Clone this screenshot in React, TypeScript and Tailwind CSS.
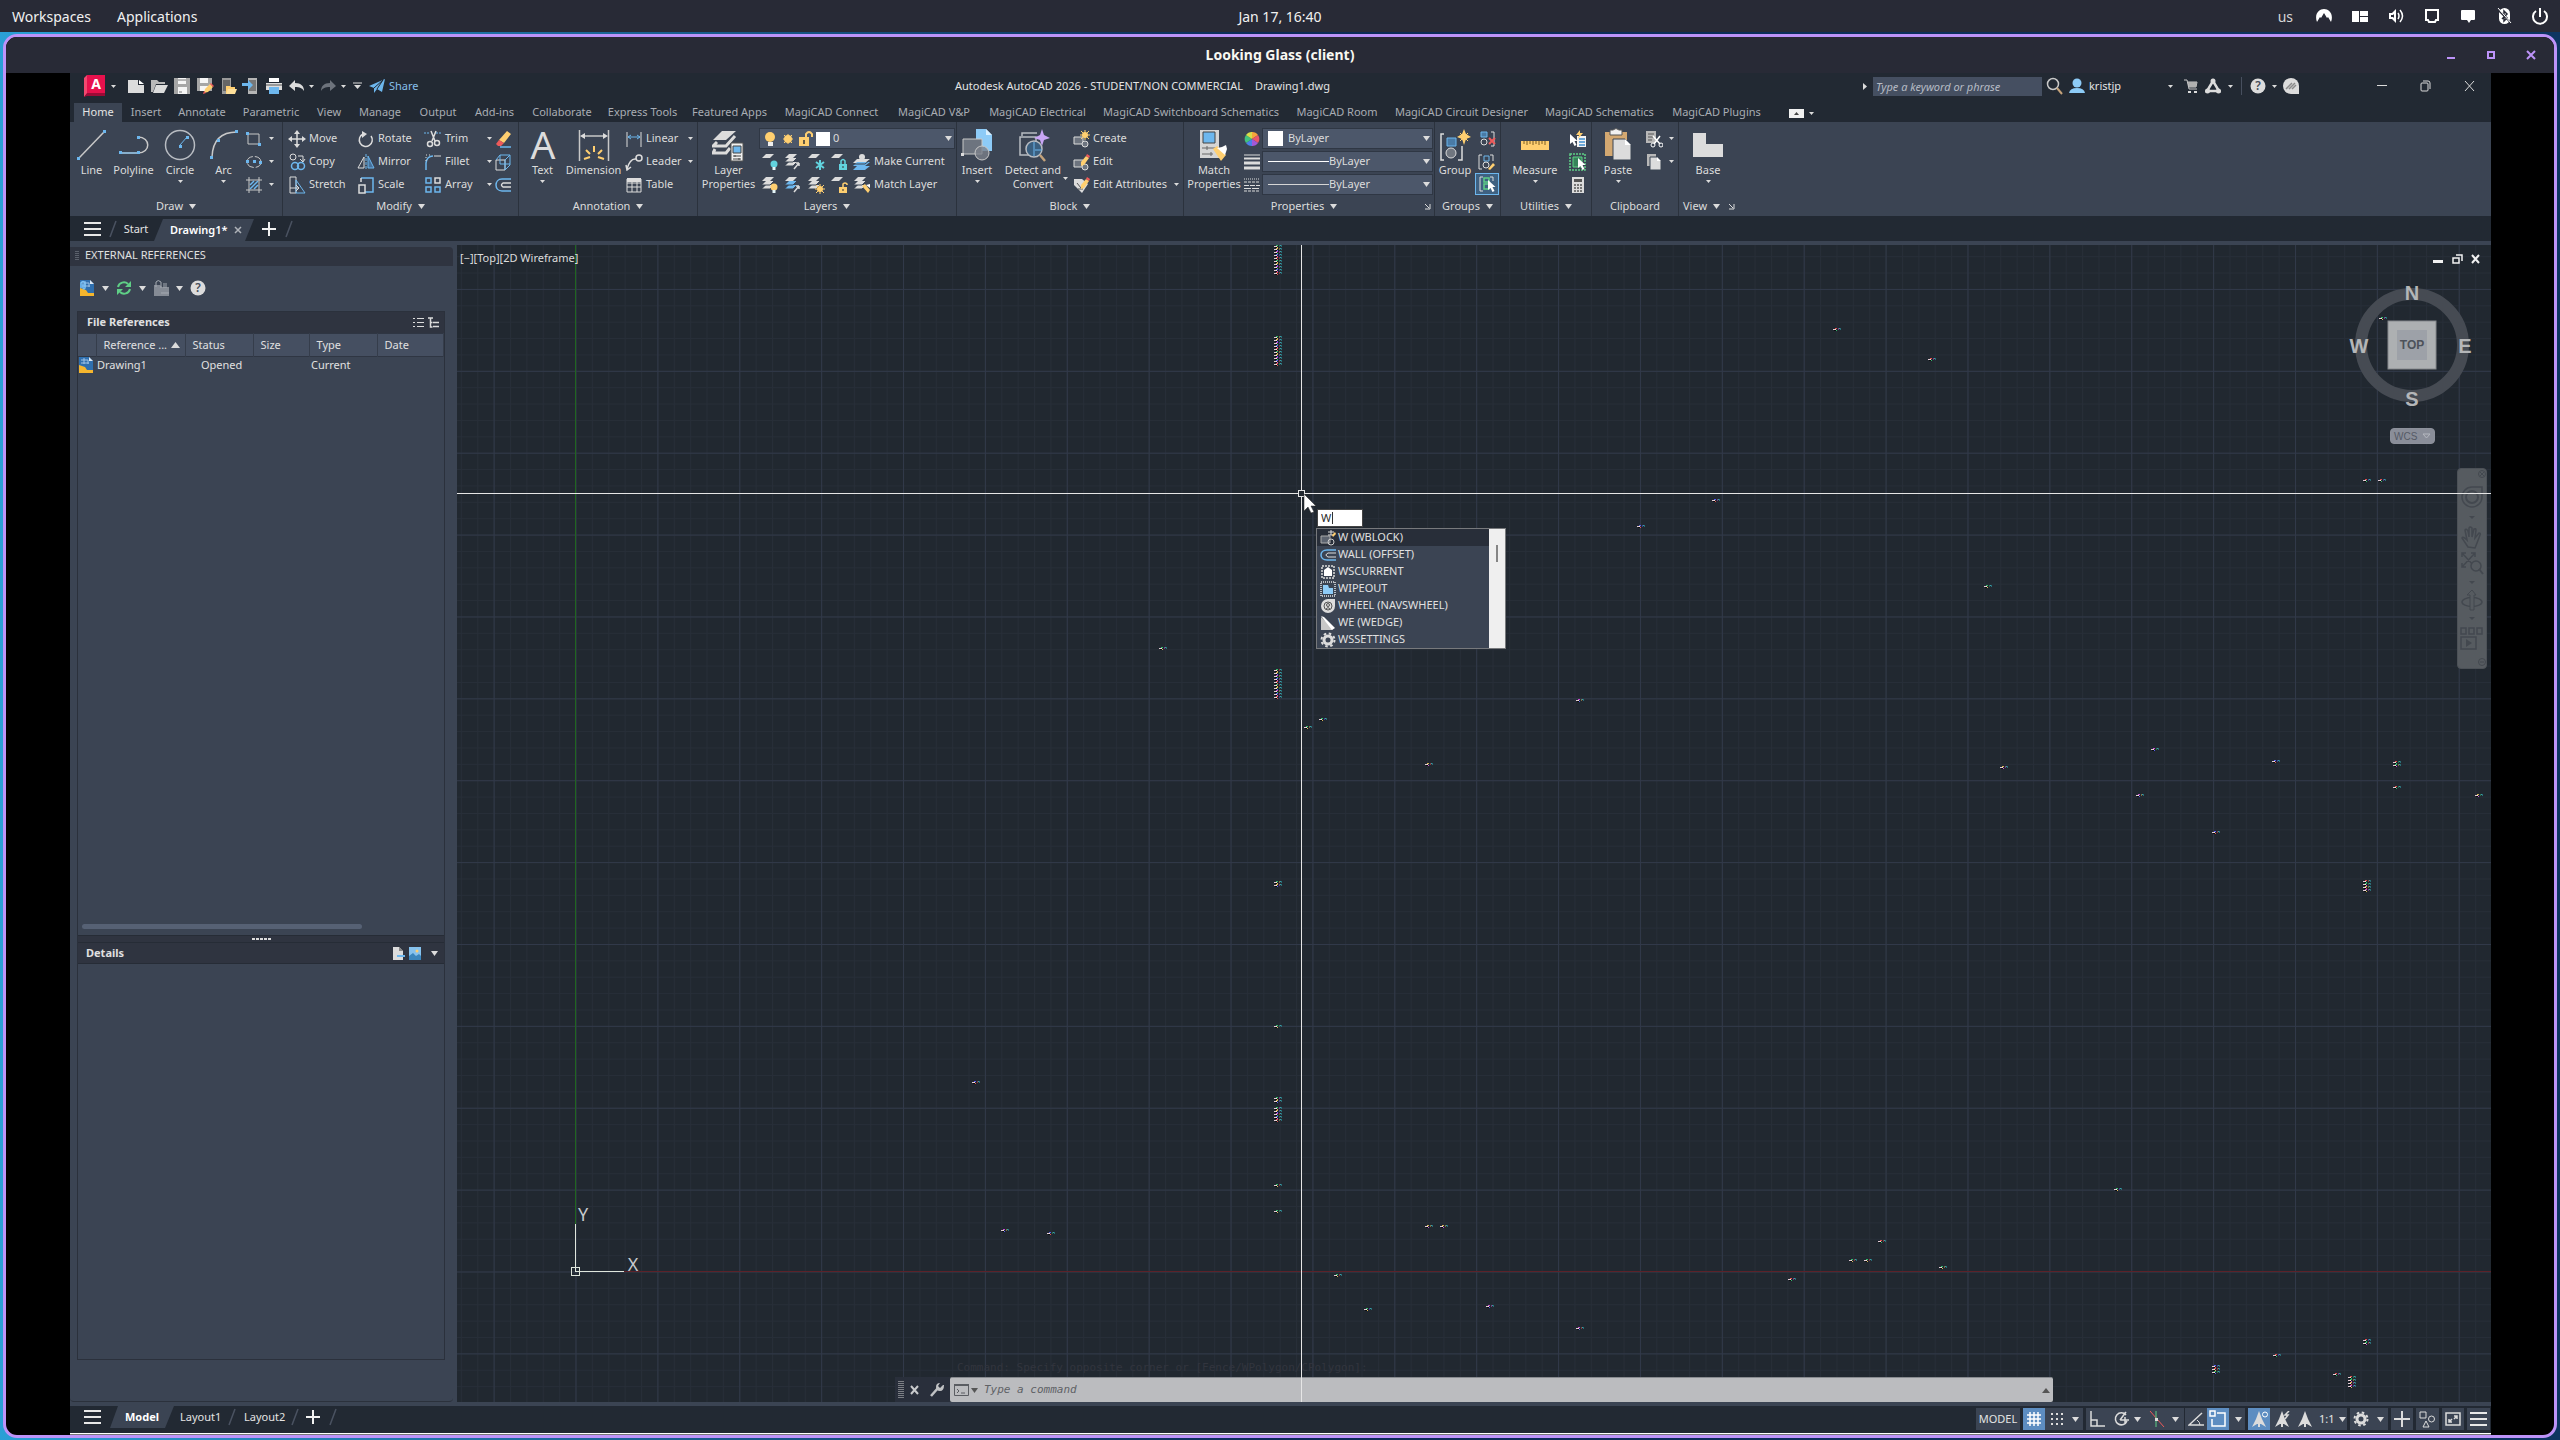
import React, { ReactNode } from "react";

type IconProps = { w?: number; h?: number; vb?: string; children: ReactNode };

/** Inline drawing with no fill by default. */
function Icon({ w = 18, h = 18, vb, children }: IconProps) {
  return (
    <svg width={w} height={h} viewBox={vb ?? `0 0 ${w} ${h}`} fill="none" stroke="none" aria-hidden="true" className="shrink-0">
      {children}
    </svg>
  );
}

const L = "#dcdcdc";
const B = "#6db7ee";
const Y = "#ffcf70";
const C = "#62d3df";
const GR = "#5fcf86";
const RD = "#ee5a5a";

function Caret({ small = false }: { small?: boolean }) {
  return small ? (
    <Icon w={5} h={3}><path d="M0 0h5L2.500 3z" fill={L} /></Icon>
  ) : (
    <Icon w={7} h={5}><path d="M0 0h7L3.500 5z" fill={L} /></Icon>
  );
}

/* ---------- desktop bar ---------- */

function DesktopBar() {
  return (
    <header className="grid h-8 shrink-0 grid-cols-3 items-center bg-[#282a36] font-['Noto_Sans',sans-serif] text-[14px] text-[#f1f1f1]">
      <nav className="flex gap-[26px] pl-3">
        <button>Workspaces</button>
        <button>Applications</button>
      </nav>
      <div className="text-center">Jan 17, 16:40</div>
      <div className="flex items-center justify-end gap-[18px] pr-[11px]">
        <span className="mr-1 text-[#d6d6d8]">us</span>
        <Icon><path d="M2 15C-1 7 4 2 9 2s10 5 7 13l-3-5-1 1-3-5-3 5-1-1z" fill="#fff" /></Icon>
        <Icon><path d="M1 4h7v11H1zM9 4h8v5H9zM9 10h8v5H9z" fill="#fff" /></Icon>
        <Icon>
          <path d="M2 6h3l4-4v14l-4-4H2z" fill="#fff" />
          <path d="M4 8h2l1-1v4l-1-1H4z" fill="#282a36" />
          <path d="M11 6q2 3 0 6M13 3q5 6 0 12" stroke="#fff" strokeWidth="1.500" />
        </Icon>
        <Icon><path d="M3 3h12v10h-2l-1 2H6l-1-2H3z" stroke="#fff" strokeWidth="2" /></Icon>
        <Icon><path d="M3 3h12q1 0 1 1v8q0 1-1 1h-3l-2 3-2-3H3q-1 0-1-1V4q0-1 1-1z" fill="#fff" /></Icon>
        <Icon>
          <rect x="4" y="1" width="11" height="16" rx="5.500" fill="#fff" />
          <path d="M7 6l5 5-3 3V4l3 3-5 5M2 2l14 14" stroke="#282a36" strokeWidth="1.500" />
          <path d="M3 1l13 15" stroke="#fff" />
        </Icon>
        <Icon><path d="M5 4a7 7 0 1 0 8 0M9 1v9" stroke="#fff" strokeWidth="2" /></Icon>
      </div>
    </header>
  );
}

function WindowTitle() {
  return (
    <div className="grid h-9 shrink-0 grid-cols-3 items-center bg-[#282a36] pb-px font-['Noto_Sans',sans-serif]">
      <span />
      <h1 className="text-center text-[14px] font-bold text-[#f8f8f2]">Looking Glass (client)</h1>
      <div className="flex justify-end gap-[30px] pr-[18px]">
        <button aria-label="Minimize window"><Icon w={10} h={10}><path d="M1 8h8" stroke="#bd93f9" strokeWidth="2" /></Icon></button>
        <button aria-label="Maximize window"><Icon w={10} h={10}><path d="M2 2h6v6H2z" stroke="#bd93f9" strokeWidth="2" /></Icon></button>
        <button aria-label="Close window"><Icon w={10} h={10}><path d="M1 1l8 8M9 1L1 9" stroke="#bd93f9" strokeWidth="2" /></Icon></button>
      </div>
    </div>
  );
}

/* ---------- application title bar ---------- */

function AppTitle() {
  return (
    <div className="grid h-7 shrink-0 grid-cols-[885px_1fr_auto] items-center pb-[2px] text-[#e4e4e4]">
      <div className="flex items-center pl-[14px]">
        <button aria-label="Application menu" className="mr-[5px]">
          <Icon w={22} h={22}>
            <path d="M0 3l3-3v19l-3 3z" fill="#f2496f" />
            <path d="M3 0h18v18H3z" fill="#e8114d" />
            <path d="M0 22l3-4h18v3H3z" fill="#9c0b36" />
            <text x="12" y="14" textAnchor="middle" fontSize="14" fontWeight="700" fill="#fff">A</text>
          </Icon>
        </button>
        <Caret small />
        <div className="ml-[11px] flex items-center gap-[5px]">
          <button aria-label="New"><Icon><path d="M1 3h10v5h6v8H1z" fill={L} /><path d="M12 3l5 4h-5z" fill="#fff" /></Icon></button>
          <button aria-label="Open"><Icon><path d="M1 3h6l2 2h6v2H6L3 15H1z" fill="#b9b9b9" /><path d="M6 8h12l-4 8H3z" fill={L} /></Icon></button>
          <button aria-label="Save"><Icon><path d="M1 1h16v16H1z" fill="#a6a6a6" /><path d="M5 1h8v6H5zM5 10h9v7H5z" fill="#f5f5f5" /><path d="M5 3h8M6 15h3" stroke="#777" /></Icon></button>
          <button aria-label="Save as"><Icon><path d="M1 1h15v13H1z" fill="#a6a6a6" /><path d="M4 1h8v5H4zM4 9h8v5H4z" fill="#f5f5f5" /><path d="M8 16l1-4 5-5 3 3-5 5z" fill={Y} /><path d="M14 7l1-1 3 3-1 1zM7 17l1-3 2 2z" fill={RD} /></Icon></button>
          <button aria-label="Open from web"><Icon><path d="M3 1h9v16H3z" fill="#9a9a9a" /><path d="M4 3h7v11H4z" fill="#666" /><path d="M7 9h4l1 1h4v7H7z" fill={Y} /><path d="M9 12h9l-2 5H7z" fill="#ffe09a" /></Icon></button>
          <button aria-label="Save to web"><Icon><path d="M6 1h9v16H6z" fill="#b5b5b5" /><path d="M7 3h7v11H7z" fill="#777" /><path d="M0 6h6V3l5 5-5 5V9H0z" fill={B} /></Icon></button>
          <button aria-label="Plot"><Icon><path d="M4 1h10v4H4z" fill="#fff" /><path d="M1 6h16v7H1z" fill={L} /><path d="M1 8h16" stroke="#555" /><path d="M4 10h10v7H4z" fill={B} /></Icon></button>
          <button aria-label="Undo"><Icon><path d="M7 3v3c6 0 9 3 9 8-2-3-4-4-9-4v4L1 9z" fill={L} /></Icon></button>
        </div>
        <div className="ml-[3px] flex items-center"><Caret small /></div>
        <button aria-label="Redo" className="mr-[4px] ml-[5px]"><Icon><path d="M11 3v3C5 6 2 9 2 14c2-3 4-4 9-4v4l6-5z" fill="#6d737c" /></Icon></button>
        <Caret small />
        <button aria-label="Customize toolbar" className="mx-[7px]"><Icon w={9} h={8}><path d="M0 1h9" stroke={L} /><path d="M1 3h7L4.500 7z" fill={L} /></Icon></button>
        <button className="flex items-center gap-1 text-[11px] text-[#86bfea]">
          <Icon w={16} h={16}><path d="M0 8L16 1l-3 13-5-3-3 4V10z" fill={B} /><path d="M5 10l9-8-6 9" stroke="#222933" /></Icon>
          Share
        </button>
      </div>
      <div className="flex gap-3 text-[11px] whitespace-pre">
        <span>Autodesk AutoCAD 2026 - STUDENT/NON COMMERCIAL</span>
        <span>Drawing1.dwg</span>
      </div>
      <div className="flex items-center justify-end pr-[14px]">
        <Icon w={4} h={7}><path d="M0 0l4 3.500L0 7z" fill={L} /></Icon>
        <input aria-label="Search" placeholder="Type a keyword or phrase" className="mr-[4px] ml-[6px] h-[19px] w-[169px] bg-[#454f61] px-[3px] text-[11px] italic placeholder:text-[#b7bcc5]" />
        <Icon><circle cx="7" cy="7" r="5.500" stroke="#c9c9c9" strokeWidth="1.500" /><path d="M11 11l5 6" stroke="#c4a27a" strokeWidth="2" /></Icon>
        <button className="ml-[5px] flex w-[93px] items-center gap-1 text-[11px]">
          <Icon w={16} h={16}><circle cx="8" cy="5" r="4.500" fill="#8dcbf7" /><path d="M0 15q1-5 8-5t8 5z" fill="#8dcbf7" /></Icon>
          kristjp
        </button>
        <span className="mr-[11px] ml-[6px]"><Caret small /></span>
        <Icon w={14} h={16}><path d="M0 2h3l2 9h8M4 4h9l-1 5H5z" stroke="#c8c8c8" /><path d="M4 4h9l-1 5H5z" fill="#b0b0b0" /><path d="M4 13h3v2H4zM10 13h3v2h-3z" fill={L} /></Icon>
        <span className="mx-[7px]"><Icon w={16} h={16}><path d="M8 3L2 13h12z" stroke={L} strokeWidth="2.500" /><circle cx="8" cy="3" r="2.500" fill={L} /><circle cx="2.500" cy="13" r="2.500" fill={L} /><circle cx="13.500" cy="13" r="2.500" fill={L} /></Icon></span>
        <Caret small />
        <span className="mx-[8px] h-[18px] w-px bg-[#474f5e]" />
        <HelpIcon />
        <span className="mx-[6px]"><Caret small /></span>
        <Icon w={16} h={16}><path d="M8 0a8 8 0 0 1 8 8v8H8A8 8 0 0 1 8 0z" fill={L} /><path d="M3 11l6-6M6 11l6-6M9 11l4-4" stroke="#8a8a8a" strokeWidth="1.500" /></Icon>
        <button aria-label="Minimize" className="ml-[78px]"><Icon w={10} h={12}><path d="M0 5.500h10" stroke={L} /></Icon></button>
        <button aria-label="Restore" className="ml-[33px]"><Icon w={11} h={12}><rect x="1" y="3" width="7" height="8" rx="1" stroke={L} /><path d="M3 1h5q2 0 2 2v6" stroke={L} /></Icon></button>
        <button aria-label="Close" className="mr-[2px] ml-[33px]"><Icon w={11} h={12}><path d="M1 1l9 10M10 1L1 11" stroke={L} /></Icon></button>
      </div>
    </div>
  );
}

function HelpIcon() {
  return (
    <Icon w={16} h={16}>
      <circle cx="8" cy="8" r="7.500" fill={L} />
      <text x="8" y="12" textAnchor="middle" fontSize="12" fontWeight="600" fill="#444c59">?</text>
    </Icon>
  );
}

const tabs: [string, string][] = [
  ["Home", "w-[48px]"], ["Insert", "w-[48px]"], ["Annotate", "w-[64px]"], ["Parametric", "w-[74px]"], ["View", "w-[42px]"],
  ["Manage", "w-[60px]"], ["Output", "w-[56px]"], ["Add-ins", "w-[57px]"], ["Collaborate", "w-[78px]"], ["Express Tools", "w-[83px]"],
  ["Featured Apps", "w-[91px]"], ["MagiCAD Connect", "w-[113px]"], ["MagiCAD V&P", "w-[92px]"], ["MagiCAD Electrical", "w-[115px]"],
  ["MagiCAD Switchboard Schematics", "w-[192px]"], ["MagiCAD Room", "w-[100px]"], ["MagiCAD Circuit Designer", "w-[149px]"],
  ["MagiCAD Schematics", "w-[127px]"], ["MagiCAD Plugins", "w-[107px]"],
];

function RibbonTabs() {
  return (
    <nav className="flex h-[21px] shrink-0 items-end pl-1 text-[11px] text-[#a9adb4]">
      {tabs.map(([name, width], i) => (
        <button key={name} className={`${width} h-[19px] text-center whitespace-nowrap ${i === 0 ? "bg-[#3b4453] text-[#e4e4e4]" : ""}`}>{name}</button>
      ))}
      <button aria-label="Minimize ribbon" className="flex h-[17px] items-center gap-[5px] pl-[19px]">
        <Icon w={15} h={9}><path d="M0 0h15v9H0z" fill="#f1f1f1" /><path d="M5 6l2.500-3L10 6z" fill="#444" /></Icon>
        <Caret small />
      </button>
    </nav>
  );
}

/* ---------- ribbon ---------- */

function Panel({ width, title, launcher, caret = true, children }: { width: string; title: string; launcher?: boolean; caret?: boolean; children: ReactNode }) {
  return (
    <section className={`${width} flex shrink-0 flex-col border-r border-[#2b323d] pt-[5px]`}>
      <div className="flex h-[69px]">{children}</div>
      <div className="flex h-5 items-center">
        <button className="flex flex-1 items-center justify-center gap-[6px]">{title}{caret && <Caret />}</button>
        {launcher && <button aria-label={`${title} settings`} className="mr-[3px]"><Icon w={7} h={7}><path d="M1 1l4 4M6 1v5H1" stroke={L} /></Icon></button>}
      </div>
    </section>
  );
}

function Big({ width, label, icon, caret }: { width: string; label: string; icon: ReactNode; caret?: boolean }) {
  return (
    <button className={`${width} flex shrink-0 flex-col items-center leading-[14px]`}>
      <span className="flex h-9 items-center">{icon}</span>
      <span className="whitespace-pre">{label}</span>
      {caret && <span className="mt-[3px]"><Caret small /></span>}
    </button>
  );
}

function Small({ icon, label, caret, caretEnd }: { icon: ReactNode; label?: string; caret?: boolean; caretEnd?: boolean }) {
  return (
    <button aria-label={label ?? "Tool"} className="flex h-[23px] items-center gap-[3px] whitespace-nowrap">
      {icon}
      {label && <span className={caretEnd ? "flex-1 text-left" : ""}>{label}</span>}
      {caret && <span className="ml-[3px]"><Caret small /></span>}
    </button>
  );
}

function Col({ width, children }: { width: string; children: ReactNode }) {
  return <div className={`${width} flex shrink-0 flex-col`}>{children}</div>;
}

function Drop({ label, value, children }: { label: string; value: string; children?: ReactNode }) {
  return (
    <div className="my-px flex h-[21px] items-center border border-[#2f3744] bg-[#4c576a] pr-[2px]">
      {children}
      <select aria-label={label} className="min-w-0 flex-1 appearance-none bg-transparent text-[11px]"><option>{value}</option></select>
      <Caret />
    </div>
  );
}

const sq = (x: number, y: number) => <rect key={`${x}-${y}`} x={x} y={y} width="3" height="3" fill={B} />;

const sheet = (y: number, fill: string) => <path key={y} d={`M5 ${y}h8l-4 4H1z`} fill={fill} />;

function LayerIcon({ tint = L, one = false, children }: { tint?: string; one?: boolean; children?: ReactNode }) {
  return (
    <Icon>
      {!one && sheet(9, tint)}
      {!one && sheet(5, tint)}
      {!one && <path d="M1 9h8l4-4M1 13h8l4-4" stroke="#3b4453" />}
      {sheet(1, L)}
      {children}
    </Icon>
  );
}

const bulb = (c: string) => <><circle cx="13" cy="11" r="3.500" fill={c} /><path d="M11.500 14h3v3h-3z" fill="#e6f6f8" /></>;
const sun = (c: string, x: number, y: number) => (
  <>
    <circle cx={x} cy={y} r="3" fill={c} />
    <path d={`M${x - 5} ${y}h10M${x} ${y - 5}v10M${x - 4} ${y - 4}l8 8M${x + 4} ${y - 4}l-8 8`} stroke={c} />
  </>
);
const lock = (c: string, open: boolean) => <><path d="M9 11h8v6H9z" fill={c} /><path d={open ? "M13 11V8q2-2 4 0v1" : "M11 11V8q2-3 4 0v3"} stroke={c} strokeWidth="1.500" /><path d="M13 13v2" stroke="#333" /></>;
const arrowMark = <path d="M10 16l5-6M15 10h-3M15 10v3" stroke={L} strokeWidth="1.500" />;
const pencil = <><path d="M9 9l5-6 3 2-5 7-3 1z" fill={Y} /><path d="M14 3l1-2 3 2-1 2z" fill={RD} /></>;
const blockBase = <><path d="M2 7h9v7H2z" fill="#6d747f" stroke={L} /><circle cx="13" cy="14" r="3" fill="#6d747f" stroke={L} /></>;
const cursor = (x: number, y: number) => <path d={`M${x} ${y}v10l2.500-2 2 4 2-1-2-4h3z`} fill="#fff" />;

function Ribbon() {
  return (
    <div className="flex h-[94px] shrink-0 bg-[#3b4453] text-[11px] text-[#dcdcdc]">
      <Panel width="w-[213px]" title="Draw">
        <Big width="w-[43px]" label="Line" icon={<Icon w={32} h={34}><path d="M3 30L28 4" stroke="#c8c8c8" strokeWidth="1.500" />{sq(1, 29)}{sq(27, 2)}</Icon>} />
        <Big width="w-[41px]" label="Polyline" icon={<Icon w={32} h={34}><path d="M3 25H20C33 25 33 9 20 9" stroke="#c8c8c8" strokeWidth="1.500" />{sq(1, 23)}{sq(19, 23)}{sq(19, 8)}<path d="M4 25h15" stroke={B} /></Icon>} />
        <Big width="w-[52px]" label="Circle" caret icon={<Icon w={32} h={34}><circle cx="16" cy="17" r="14.500" stroke="#b8bcc2" strokeWidth="1.500" /><path d="M16 17l7-8" stroke={B} />{sq(15, 17)}{sq(22, 8)}</Icon>} />
        <Big width="w-[35px]" label="Arc" caret icon={<Icon w={32} h={34}><path d="M4 29Q5 4 29 4" stroke="#c8c8c8" strokeWidth="1.500" />{sq(2, 28)}{sq(9, 11)}{sq(27, 2)}</Icon>} />
        <Col width="ml-[4px] w-[34px]">
          <Small caret icon={<Icon><path d="M3 4h11v10H3z" stroke="#c8c8c8" />{sq(1, 2)}{sq(13, 13)}</Icon>} />
          <Small caret icon={<Icon><ellipse cx="9" cy="9" rx="7" ry="5.500" stroke="#c8c8c8" strokeDasharray="8 2" />{sq(8, 7)}{sq(1, 7)}{sq(14, 8)}</Icon>} />
          <Small caret icon={<Icon><path d="M1 4h16M1 14h16M4 1v16M14 1v16" stroke="#c8c8c8" /><path d="M5 9l4-4M5 13l8-8M9 13l4-4" stroke={B} strokeWidth="1.500" /></Icon>} />
        </Col>
      </Panel>

      <Panel width="w-[236px]" title="Modify">
        <Col width="ml-[5px] w-[69px]">
          <Small label="Move" icon={<Icon><path d="M9 2v14M2 9h14" stroke={L} strokeWidth="1.500" /><path d="M9 0l3 4H6zM9 18l3-4H6zM0 9l4-3v6zM18 9l-4-3v6z" fill={L} /></Icon>} />
          <Small label="Copy" icon={<Icon><circle cx="5" cy="4" r="3" stroke={L} /><path d="M10 3h5v5M12 6l3 3 2-3" stroke={L} /><circle cx="7" cy="13" r="3.500" stroke={B} strokeWidth="1.500" /><circle cx="13" cy="13" r="3.500" stroke={B} strokeWidth="1.500" /></Icon>} />
          <Small label="Stretch" icon={<Icon><path d="M2 1h6v16H2z" stroke={L} /><path d="M8 4l9 13H8z" stroke={B} /><path d="M2 12h9M8 9l3 3-3 3" stroke={L} /></Icon>} />
        </Col>
        <Col width="w-[67px]">
          <Small label="Rotate" icon={<Icon><path d="M6 4a6.500 6.500 0 1 0 8 2" stroke={L} strokeWidth="1.500" /><path d="M5 1l5 3-5 4z" fill={L} /></Icon>} />
          <Small label="Mirror" icon={<Icon><path d="M7 4v11H1z" stroke={L} /><path d="M11 3v12h6z" stroke={B} fill="#46719a" /><path d="M9 1v16" stroke={B} strokeDasharray="3 1" /></Icon>} />
          <Small label="Scale" icon={<Icon><path d="M4 2h12v14H8" stroke={B} strokeWidth="1.500" /><path d="M2 9h6v8H2zM4 2v4" stroke={L} strokeWidth="1.500" /></Icon>} />
        </Col>
        <Col width="w-[68px]">
          <Small caret caretEnd label="Trim" icon={<Icon><path d="M0 3h6M12 3h5" stroke={B} strokeDasharray="2 1" /><path d="M7 1l4 10M12 1L8 11" stroke={L} strokeWidth="1.500" /><circle cx="6" cy="14" r="2.500" stroke={L} strokeWidth="1.500" /><circle cx="13" cy="13" r="2.500" stroke={L} strokeWidth="1.500" /></Icon>} />
          <Small caret caretEnd label="Fillet" icon={<Icon><path d="M2 17V10Q3 3 9 3" stroke={B} strokeWidth="1.500" /><path d="M10 3h7" stroke={L} /><path d="M2 8V2h6" stroke={L} strokeDasharray="1 2" /></Icon>} />
          <Small caret caretEnd label="Array" icon={<Icon><path d="M2 2h5v5H2zM11 11h5v5h-5zM2 11h5v5H2z" stroke={B} strokeWidth="1.500" /><path d="M11 2h5v5h-5z" stroke={L} strokeWidth="1.500" /></Icon>} />
        </Col>
        <Col width="ml-[2px] w-[20px]">
          <Small icon={<Icon><path d="M6 17h11" stroke={B} strokeWidth="1.500" /><path d="M5 10l8-9 4 3-7 9z" fill={Y} /><path d="M5 10l5 3-3 3H4l-2-2z" fill={RD} /></Icon>} />
          <Small icon={<Icon><path d="M2 7h9v10H2z" stroke={L} /><path d="M2 7l4-5h10l-5 5M16 2v10l-5 5M11 7v10M6 2v9h10" stroke={B} /></Icon>} />
          <Small icon={<Icon><path d="M17 3H8C0 3 0 15 8 15h9" stroke={B} strokeWidth="1.500" /><path d="M17 7H9Q6 9 9 11h8" stroke={L} strokeWidth="1.500" /></Icon>} />
        </Col>
      </Panel>

      <Panel width="w-[179px]" title="Annotation">
        <Big width="w-[47px]" label="Text" caret icon={<Icon w={28} h={34}><text x="14" y="31" textAnchor="middle" fontSize="39" fill={L}>A</text></Icon>} />
        <Big width="w-[55px]" label="Dimension" icon={<Icon w={32} h={34}><path d="M1.500 2v31M30.500 2v31M4 8h24" stroke="#c8c8c8" strokeWidth="1.500" /><path d="M2 8l5-3v6zM30 8l-5-3v6z" fill={L} /><path d="M16 18v6M8 22l4 4M24 22l-4 4M6 31l6-2M26 31l-6-2" stroke={Y} strokeWidth="2" /></Icon>} />
        <Col width="ml-[4px] w-[68px]">
          <Small caret caretEnd label="Linear" icon={<Icon><path d="M2 2v15M16 2v15" stroke={L} /><path d="M3 7h12M6 5L3 7l3 2M12 5l3 2-3 2" stroke={B} /></Icon>} />
          <Small caret caretEnd label="Leader" icon={<Icon><path d="M2 16Q5 5 11 6M1 12l1 5 4-3" stroke={L} strokeWidth="1.500" /><circle cx="14" cy="5" r="3" stroke={L} strokeWidth="1.500" /></Icon>} />
          <Small label="Table" icon={<Icon><path d="M2 3h14v13H2zM2 7h14M2 11h14M7 5v11M12 5v11" stroke={L} /><path d="M2 2h14v4H2z" fill={L} /></Icon>} />
        </Col>
      </Panel>

      <Panel width="w-[259px]" title="Layers">
        <Big width="w-[61px]" label={"Layer\nProperties"} icon={<Icon w={34} h={34}><path d="M10 3h14L14 12H1z" fill={L} /><path d="M5 14L1 18h13l9-10M3 21l-2 4h13l4-5" stroke={L} strokeWidth="3" /><path d="M19 15h12v18H19z" fill="#f1f1f1" stroke="#555" /><path d="M21 18h8v7h-8z" fill={B} stroke="#444" /><path d="M21 28h8M21 31h8M23 27v2M27 30v2" stroke="#444" /></Icon>} />
        <div className="flex w-[196px] flex-col">
          <Drop label="Layer" value="0">
            <span className="ml-[3px] flex items-center gap-px pr-[3px]">
              <Icon w={15}><circle cx="7" cy="7" r="5" fill={Y} /><path d="M5 12h5v4H5z" fill="#eee" /></Icon>
              <Icon w={17}>{sun(Y, 9, 9)}<circle cx="9" cy="9" r="4" fill={Y} /></Icon>
              <Icon w={18}><path d="M2 7h10v9H2z" fill={Y} /><path d="M9 7V4q3-4 6 0v3" stroke={Y} strokeWidth="2" /><path d="M7 10v4" stroke="#333" strokeWidth="1.500" /></Icon>
              <span className="size-[14px] bg-white" />
            </span>
          </Drop>
          <div className="flex gap-[5px] pl-[2px]">
            <Small icon={<LayerIcon one>{bulb(C)}</LayerIcon>} />
            <Small icon={<LayerIcon>{arrowMark}</LayerIcon>} />
            <Small icon={<LayerIcon one><path d="M13 7v10M9 9l8 6M17 9l-8 6" stroke={C} strokeWidth="2" /></LayerIcon>} />
            <Small icon={<LayerIcon one>{lock(C, false)}</LayerIcon>} />
            <Small label="Make Current" icon={<Icon><path d="M4 6h13l-5 4H0z" fill={L} /><path d="M4 9h13l-5 4H0zM4 13h13l-5 4H0z" fill={B} /><circle cx="9" cy="4" r="3" fill={L} /><path d="M0 11h12l5-4" stroke="#3b4453" /></Icon>} />
          </div>
          <div className="flex gap-[5px] pl-[2px]">
            <Small icon={<LayerIcon>{bulb(Y)}</LayerIcon>} />
            <Small icon={<LayerIcon tint={B}>{arrowMark}</LayerIcon>} />
            <Small icon={<LayerIcon>{sun(Y, 13, 13)}</LayerIcon>} />
            <Small icon={<LayerIcon one>{lock(Y, true)}</LayerIcon>} />
            <Small label="Match Layer" icon={<LayerIcon><path d="M9 10l3-2 5 6-2 3z" fill={Y} /><path d="M13 9l4-1v4z" fill="#fff" /></LayerIcon>} />
          </div>
        </div>
      </Panel>

      <Panel width="w-[227px]" title="Block">
        <Big width="w-[40px]" label="Insert" caret icon={<Icon w={32} h={34}><path d="M15 1h10l6 6v16H15z" fill="#8dcbf7" /><path d="M25 1v6h6" fill="#d9effd" /><path d="M2 11h19v15H2z" fill="#6d747f" stroke="#c8c8c8" /><circle cx="21" cy="25" r="7" fill="#7a808a" fillOpacity=".8" stroke="#c8c8c8" /><path d="M0 25h3v3H0z" fill={L} /></Icon>} />
        <div className="ml-[6px] flex w-[69px] items-start">
          <Big width="w-[60px]" label={"Detect and\nConvert"} icon={<Icon w={34} h={34}><path d="M6 8V5h15M4 9h16v18H4z" stroke="#b8bcc2" strokeWidth="1.500" /><circle cx="18" cy="21" r="8" fill="#3a5f80" stroke="#b8bcc2" strokeWidth="1.500" /><path d="M18 14v14M19 22h7" stroke={B} /><path d="M24 27l5 6" stroke="#c4a27a" strokeWidth="2.500" /><path d="M26 1l2 6 6 3-6 2-2 6-2-6-6-2 6-3z" fill="#c9a6f5" /></Icon>} />
          <span className="mt-[50px]"><Caret small /></span>
        </div>
        <Col width="w-[107px]">
          <Small label="Create" icon={<Icon>{blockBase}{sun(Y, 13, 5)}</Icon>} />
          <Small label="Edit" icon={<Icon>{blockBase}{pencil}</Icon>} />
          <Small caret caretEnd label="Edit Attributes" icon={<Icon><path d="M2 3h8l6 5-6 9-8-8z" fill={L} /><path d="M5 7l4 5M6 13h5" stroke="#555" />{pencil}</Icon>} />
        </Col>
      </Panel>

      <Panel width="w-[251px]" title="Properties" launcher>
        <Big width="w-[60px]" label={"Match\nProperties"} icon={<Icon w={32} h={34}><path d="M2 2h19v28H2z" fill="#d5d5d5" /><path d="M5 4h12v11H5z" fill={B} stroke="#444" /><path d="M4 20h14M4 26h11M9 18v4M13 24v4" stroke="#666" /><path d="M15 21l4-3 9 9-5 6z" fill={Y} /><path d="M19 20l5-1 4-2 1 4-2 6z" fill="#fff" /></Icon>} />
        <Col width="w-[18px]">
          <Small icon={<Icon w={16} h={18}><path d="M8 9V2a7 7 0 0 1 6 3z" fill="#f5a53c" /><path d="M8 9l6-4a7 7 0 0 1 0 8z" fill="#e9576b" /><path d="M8 9l6 4a7 7 0 0 1-6 3z" fill="#a358d8" /><path d="M8 9v7a7 7 0 0 1-6-3z" fill="#4b7fe8" /><path d="M8 9l-6 4a7 7 0 0 1 0-8z" fill="#42c27e" /><path d="M8 9L2 5a7 7 0 0 1 6-3z" fill="#d8dd4a" /></Icon>} />
          <Small icon={<Icon w={16} h={18}><path d="M0 2h16" stroke={L} /><path d="M0 5.500h16" stroke={L} strokeWidth="2" /><path d="M0 10h16M0 15h16" stroke={L} strokeWidth="3" /></Icon>} />
          <Small icon={<Icon w={16} h={18}><path d="M0 3h16" stroke={L} strokeDasharray="1 1" /><path d="M0 6h16" stroke={L} strokeDasharray="3 1" /><path d="M0 9.500h16" stroke={L} strokeDasharray="5 1" /><path d="M0 12.500h16" stroke={L} strokeDasharray="7 1" /><path d="M0 15h16" stroke={L} strokeDasharray="3 1" /></Icon>} />
        </Col>
        <Col width="w-[171px]">
          <Drop label="Object color" value="ByLayer"><span className="mx-[5px] size-[15px] bg-white" /></Drop>
          <Drop label="Lineweight" value="ByLayer"><span className="ml-[5px] h-px w-[61px] bg-white" /></Drop>
          <Drop label="Linetype" value="ByLayer"><span className="ml-[5px] h-px w-[61px] bg-[#d5d5d5]" /></Drop>
        </Col>
      </Panel>

      <Panel width="w-[66px]" title="Groups">
        <Big width="w-[40px]" label="Group" icon={<Icon w={34} h={34}><path d="M6 6H3v26h3M20 32h4V18" stroke={L} strokeWidth="1.500" /><path d="M9 10h9v8H9z" fill="#4a7ba6" stroke={B} /><circle cx="13" cy="25" r="5" fill="#70767f" stroke={L} />{sun(Y, 26, 9)}<path d="M26 1l2 5 5 3-5 2-2 6-2-6-5-2 5-3z" fill={Y} /></Icon>} />
        <Col width="w-[23px] items-center">
          <Small icon={<Icon><path d="M13 2h3v14h-3" stroke={L} /><path d="M3 2h6v5H3z" fill="#4a7ba6" stroke={B} /><circle cx="6" cy="12" r="3" stroke={L} /><path d="M11 8l6 6M17 8l-6 6" stroke={RD} strokeWidth="2" /></Icon>} />
          <Small icon={<Icon><path d="M4 2H1v14h3M12 2h3v6" stroke={L} /><path d="M6 3h5v5H6z" stroke={B} /><circle cx="8" cy="12" r="3" stroke={L} /><path d="M10 16l5-6 2 2-5 5z" fill={Y} /></Icon>} />
          <button aria-label="Group selection" className="flex h-[22px] items-center border border-[#6db7ee] bg-[#3f6181] px-[2px]"><Icon><path d="M5 2H2v14h3M12 2h3v4" stroke={L} /><path d="M6 3h5v4H6zM6 9h5v5H6z" stroke={GR} strokeWidth="1.500" />{cursor(10, 5)}</Icon></button>
        </Col>
      </Panel>

      <Panel width="w-[91px]" title="Utilities">
        <Big width="w-[68px]" label="Measure" caret icon={<Icon w={32} h={34}><path d="M2 13h28v9H2z" fill={Y} /><path d="M5 13v3M8 13v4M11 13v3M14 13v4M17 13v3M20 13v4M23 13v3M26 13v4" stroke="#7b5d23" /></Icon>} />
        <Col width="w-[20px]">
          <Small icon={<Icon><path d="M8 6h9v11H8z" fill="#f4f4f4" /><path d="M10 9h6M10 12h6M10 15h6" stroke="#3f8fd0" strokeWidth="1.500" />{cursor(1, 4)}<path d="M11 0L7 5h3L9 9l5-6h-3z" fill={Y} /></Icon>} />
          <Small icon={<Icon><path d="M1 1h15v16H1z" stroke={GR} strokeDasharray="2 1" strokeWidth="1.500" /><path d="M4 4h9v10H4z" fill="#37845a" stroke={GR} />{cursor(9, 5)}</Icon>} />
          <Small icon={<Icon><path d="M3 1h12v16H3z" fill={L} /><path d="M5 3h8v3H5z" fill="#555" /><path d="M5 9h8M5 12h8M5 15h8" stroke="#555" strokeWidth="1.500" strokeDasharray="2 1" /></Icon>} />
        </Col>
      </Panel>

      <Panel width="w-[87px]" title="Clipboard" caret={false}>
        <Big width="w-[52px]" label="Paste" caret icon={<Icon w={32} h={34}><path d="M3 4h22v24H3z" fill="#d3a871" /><path d="M8 2h3q3-3 6 0h3v5H8z" fill="#f1f1f1" stroke="#555" /><path d="M11 11h12l6 6v15H11z" fill={L} stroke="#3b4453" /><path d="M23 11v6h6z" fill="#fff" /></Icon>} />
        <Col width="ml-px w-[30px]">
          <Small caret icon={<Icon><path d="M1 1h10v12H1z" fill="#b8b8b8" /><path d="M3 4h6M3 7h6M3 10h4" stroke="#555" /><path d="M8 6l7 8M15 6l-6 8" stroke="#fff" strokeWidth="1.500" /><circle cx="8" cy="15" r="2" stroke="#fff" /><circle cx="16" cy="15" r="2" stroke="#fff" /></Icon>} />
          <Small caret icon={<Icon><path d="M2 1h9v12H2z" fill="#b8b8b8" /><path d="M5 4h7l4 4v9H5z" fill={L} stroke="#3b4453" /><path d="M12 4v4h4z" fill="#fff" /></Icon>} />
        </Col>
      </Panel>

      <section className="flex flex-col pt-[5px]">
        <div className="flex h-[69px]">
          <Big width="w-[58px]" label="Base" caret icon={<Icon w={32} h={34}><path d="M1 5h13v11h17v13H1z" fill={L} /></Icon>} />
        </div>
        <div className="flex h-5 items-center gap-[6px] pl-[4px]">View<Caret /><Icon w={13} h={7}><path d="M3 1l4 4M8 1v5H3" stroke={L} /></Icon></div>
      </section>
    </div>
  );
}

/* ---------- tab strips ---------- */

function Slash() {
  return <Icon w={8} h={18}><path d="M1 17L7 1" stroke="#4a5261" strokeWidth="1.500" /></Icon>;
}

function Menu() {
  return <Icon w={17} h={16}><path d="M0 2h17M0 8h17M0 14h17" stroke="#e8e8e8" strokeWidth="2" /></Icon>;
}

function Plus() {
  return <Icon w={14} h={14}><path d="M0 7h14M7 0v14" stroke="#f1f1f1" strokeWidth="2" /></Icon>;
}

function FileTabs() {
  return (
    <nav className="flex h-[25px] shrink-0 items-center pt-px pl-[14px] text-[11px] text-[#e4e4e4]">
      <button aria-label="File tab menu"><Menu /></button>
      <span className="ml-[8px]"><Slash /></span>
      <button className="ml-[6px] w-[26px]">Start</button>
      <div className="ml-[5px] flex h-[22px] w-[100px] items-center gap-[6px] self-end bg-[#3b4453] pl-[16px] [clip-path:polygon(9px_0,100%_0,calc(100%-9px)_100%,0_100%)]">
        <button className="font-semibold text-white">Drawing1*</button>
        <button aria-label="Close tab"><Icon w={8} h={8}><path d="M1 1l6 6M7 1L1 7" stroke="#aeb2b8" strokeWidth="1.500" /></Icon></button>
      </div>
      <button aria-label="New tab" className="mr-[9px] ml-[8px]"><Plus /></button>
      <Slash />
    </nav>
  );
}

/* ---------- external references palette ---------- */

function XrefIcon({ clip = false }: { clip?: boolean }) {
  return (
    <Icon w={16} h={16}>
      <path d="M1 0h10l4 4v12H1z" fill="#2f6fae" />
      <path d="M11 0v4h4z" fill="#dfe9f3" />
      <path d="M3 3h7M3 6h8M6 1v6M10 3v4" stroke="#9fc3e6" />
      <path d="M1 8l6 2 2 3h6v3H1z" fill="#f5b62e" />
      {clip && <path d="M2 8V3q2-3 4 0v5q-1 2-2 0V4" stroke="#7cc2f5" strokeWidth="1.500" />}
    </Icon>
  );
}

function Palette() {
  return (
    <aside className="flex w-[387px] shrink-0 flex-col bg-[#3b4453] pt-[2px] text-[11px] text-[#e0e0e0]">
      <div className="mr-[4px] flex h-[19px] items-center gap-[6px] rounded-tr bg-[#2f3440] pb-[2px] pl-[5px]">
        <Icon w={4} h={10}><path d="M1 0v10M3 0v10" stroke="#888e98" strokeDasharray="1 1" /></Icon>
        <h2>EXTERNAL REFERENCES</h2>
      </div>
      <div className="flex h-[45px] items-center gap-[7px] pb-px pl-[9px]">
        <button aria-label="Attach"><XrefIcon clip /></button><Caret />
        <button aria-label="Refresh"><Icon w={16} h={16}><path d="M2 7a6 6 0 0 1 10-3M14 9a6 6 0 0 1-10 3" stroke={GR} strokeWidth="2" /><path d="M15 1v6H9zM1 15V9h6z" fill={GR} /></Icon></button><Caret />
        <button aria-label="Change path"><Icon w={16} h={16}><path d="M1 5h6l2 2h7v9H1z" fill="#858b95" /><path d="M3 7V2q2-3 5 0v6M11 3v5M13 3v5M8 13h8" stroke="#a5aab2" /></Icon></button><Caret />
        <button aria-label="Help"><HelpIcon /></button>
      </div>
      <div className="mr-[12px] mb-[39px] ml-[7px] flex flex-1 flex-col border border-[#2b313c]">
        <div className="flex h-[21px] shrink-0 items-center bg-[#2f3440] pl-[9px]">
          <h3 className="flex-1 font-bold">File References</h3>
          <button aria-label="List view" className="mr-[4px]"><Icon w={11} h={11}><path d="M0 1.500h2M0 5.500h2M0 9.500h2M4 1.500h7M4 5.500h7M4 9.500h7" stroke={L} /></Icon></button>
          <button aria-label="Tree view" className="mr-[4px]"><Icon w={12} h={11}><path d="M0 1h5M2.500 1v9h2M2.500 5.500h2M5 5.500h6M5 9.500h6" stroke={L} strokeWidth="1.500" /></Icon></button>
        </div>
        <table className="w-full table-fixed border-collapse">
          <thead>
            <tr className="h-[23px] border-y border-[#2f3643] bg-[#454f61] text-left [&>th]:border-r [&>th]:border-[#353d4b] [&>th]:pl-[7px] [&>th]:font-normal [&>th]:whitespace-nowrap">
              <th aria-label="Icon" className="w-[18px]" />
              <th className="w-[89px]"><span className="flex items-center gap-[4px]">Reference ... <Icon w={9} h={6}><path d="M0 6h9L4.500 0z" fill={L} /></Icon></span></th>
              <th className="w-[68px]">Status</th>
              <th className="w-[56px]">Size</th>
              <th className="w-[68px]">Type</th>
              <th>Date</th>
            </tr>
          </thead>
          <tbody>
            <tr className="h-[17px]">
              <td><XrefIcon /></td><td className="pl-px">Drawing1</td><td className="pl-[16px]">Opened</td><td /><td className="pl-[2px]">Current</td><td />
            </tr>
          </tbody>
        </table>
        <div className="flex-1" />
        <div className="mb-[6px] ml-[4px] h-[5px] w-[280px] rounded-full bg-[#566174]" />
        <div className="flex h-[8px] shrink-0 items-center justify-center border-y border-[#262c36] bg-[#2f3440]">
          <Icon w={19} h={2}><path d="M0 1h19" stroke={L} strokeWidth="2" strokeDasharray="3 1" /></Icon>
        </div>
        <div className="flex h-[21px] shrink-0 items-center border-b border-[#262c36] bg-[#2f3440] pl-[8px]">
          <h3 className="flex-1 font-bold">Details</h3>
          <button aria-label="Details view" className="mr-[4px]"><Icon w={12} h={13}><path d="M0 0h6l4 4v9H0z" fill={L} /><path d="M6 0v4h4z" fill="#888" /><path d="M4 9h8" stroke={B} strokeWidth="2" /></Icon></button>
          <button aria-label="Preview" className="mr-[10px]"><Icon w={12} h={13}><path d="M0 0h12v13H0z" fill="#86c2ee" /><path d="M0 9l4-3 3 3 3-2 2 2v4H0z" fill="#3b86bd" /><circle cx="8" cy="4" r="1.500" fill={Y} /></Icon></button>
          <span className="mr-[6px]"><Caret /></span>
        </div>
        <div className="h-[395px] shrink-0" />
      </div>
      <div className="-mt-[3px] mr-[4px] h-[6px] rounded-b border-b border-[#2b313c]" />
    </aside>
  );
}

/* ---------- drawing area ---------- */

/** Position and number of stacked rows of each tiny block on the sheet. */
const blocks: [number, number, number][] = [
  [817, 0, 10], [817, 91, 10], [817, 424, 10], [817, 636, 2], [817, 780, 1], [817, 852, 2], [817, 862, 5], [817, 939, 1], [817, 965, 1],
  [1376, 83, 1], [1471, 113, 1], [1255, 254, 1], [1180, 280, 1], [1527, 340, 1], [702, 402, 1], [847, 481, 1], [862, 473, 1], [1119, 454, 1],
  [968, 518, 1], [1543, 521, 1], [1694, 503, 1], [1815, 515, 1], [1936, 516, 2], [1936, 541, 1], [1679, 549, 1], [2018, 549, 1], [1755, 586, 1],
  [1906, 635, 4], [515, 836, 1], [544, 984, 1], [590, 987, 1], [968, 980, 1], [983, 980, 1], [877, 1029, 1], [907, 1063, 1], [1029, 1060, 1],
  [1119, 1082, 1], [1331, 1033, 1], [1392, 1014, 1], [1407, 1014, 1], [1421, 995, 1], [1482, 1021, 1], [1657, 943, 1], [1906, 1094, 2],
  [1755, 1120, 3], [1816, 1109, 1], [1876, 1128, 1], [1891, 1131, 4], [1906, 234, 1], [1921, 234, 1], [2001, 110, 1], [1922, 72, 1],
];

const hues = ["#5a5cf0", "#e04f4f", "#35b86d", "#d9b257", "#c94fd0"];

function Block({ x, y, rows }: { x: number; y: number; rows: number }) {
  return (
    <g>
      {Array.from({ length: rows }, (_, i) => (
        <g key={i}>
          <rect x={x} y={y + i * 3 + 1} width="2" height="1" fill="#e3ccd6" />
          <rect x={x + 2} y={y + i * 3} width="2" height="1" fill={hues[(x + i) % 5]} />
          <rect x={x + 2} y={y + i * 3 + 1} width="1" height="1" fill="#f4e6d2" />
          <rect x={x + 1} y={y + i * 3 + 2} width="2" height="1" fill="#090b0f" />
          <rect x={x + 3} y={y + i * 3 + 2} width="1" height="1" fill={hues[(x + i * 2 + 1) % 5]} />
          <rect x={x + 5} y={y + i * 3} width="1" height="2" fill={hues[(x + y + i) % 5]} fillOpacity=".5" />
          <rect x={x + 6} y={y + i * 3} width="1" height="1" fill="#37a0a8" />
          <rect x={x + 7} y={y + i * 3} width="1" height="2" fill="#2b6d76" />
        </g>
      ))}
    </g>
  );
}

function Sheet() {
  return (
    <svg className="absolute inset-0 h-full w-full font-['Noto_Sans',sans-serif]" shapeRendering="crispEdges" aria-hidden="true">
      <defs>
        <pattern id="minor" x="118.500" y="1026.500" width="16.376" height="16.376" patternUnits="userSpaceOnUse">
          <path d="M.5 0v16.376M0 .5h16.376" stroke="#272e38" shapeRendering="auto" />
        </pattern>
        <pattern id="major" x="118.500" y="1026.500" width="81.880" height="81.880" patternUnits="userSpaceOnUse">
          <path d="M.5 0v81.880M0 .5h81.880" stroke="#313949" shapeRendering="auto" />
        </pattern>
      </defs>
      <rect width="100%" height="100%" fill="#212830" />
      <rect width="100%" height="100%" fill="url(#minor)" />
      <rect width="100%" height="100%" fill="url(#major)" />
      <path d="M118.500 0v1026" stroke="#20661f" />
      <path d="M118 1026.500H4000" stroke="#5c2229" />
      {blocks.map(([x, y, rows]) => <Block key={`${x}-${y}`} x={x} y={y} rows={rows} />)}
      <path d="M118.500 979v47h48" stroke="#dfe6dc" fill="none" />
      <rect x="114.500" y="1022.500" width="8" height="8" stroke="#dfe6dc" fill="none" />
      <g fill="#c7cacd" fontSize="18" textAnchor="middle">
        <text x="126" y="976">Y</text>
        <text x="176" y="1026">X</text>
      </g>
    </svg>
  );
}

function Crosshair() {
  return (
    <svg className="pointer-events-none absolute inset-0 h-full w-full" shapeRendering="crispEdges" aria-hidden="true">
      <path d="M0 248.500H4000M844.500 0V4000" stroke="#e6e6e6" />
      <rect x="841.500" y="245.500" width="6" height="6" fill="#212830" stroke="#e6e6e6" />
      <path d="M847 249v17l4-4 3 6 3-1-3-6h5z" fill="#fff" stroke="#222" strokeWidth=".5" shapeRendering="auto" />
    </svg>
  );
}

function ViewCube() {
  return (
    <svg width="140" height="140" viewBox="-8 -8 140 140" className="absolute top-[30px] right-[9px] font-['Liberation_Sans',sans-serif]" textAnchor="middle">
      <circle cx="62" cy="62" r="51" fill="none" stroke="#464b53" strokeWidth="12" />
      <rect x="38" y="38" width="48" height="48" fill="#adb0b2" stroke="#85888b" />
      <rect x="47" y="47" width="30" height="30" fill="#9da1a8" />
      <g fill="#b4b6b8" fontSize="20" fontWeight="700">
        <text x="62" y="17">N</text><text x="62" y="123">S</text><text x="9" y="70">W</text><text x="115" y="70">E</text>
      </g>
      <text x="62" y="66" fill="#4d525a" fontSize="12" fontWeight="700">TOP</text>
    </svg>
  );
}

function NavBar() {
  const s = "#43484f";
  return (
    <div className="absolute top-[223px] right-[4px] flex h-[201px] w-[30px] flex-col items-center rounded-[4px] border border-[#4c5157] bg-[#565b60]">
      <Icon w={28} h={14}><circle cx="24" cy="5" r="3.500" stroke={s} /><path d="M22 3l4 4M26 3l-4 4" stroke={s} /></Icon>
      <button aria-label="Steering wheel"><Icon w={24} h={28}><path d="M12 4h10v10a10 10 0 1 1-10-10z" stroke={s} strokeWidth="1.500" /><circle cx="12" cy="14" r="6" stroke={s} strokeWidth="2" /></Icon></button>
      <Icon w={6} h={12}><path d="M0 5h6L3 8z" fill={s} /></Icon>
      <button aria-label="Pan"><Icon w={24} h={26}><path d="M8 24l-6-9q1-2 5 2L5 7q1-2 3 1l1 6V5q1-2 3 0v9l2-8q2-1 2 1l-1 8 4-5q2 0 1 2l-3 8-2 5z" stroke={s} strokeWidth="1.500" /></Icon></button>
      <button aria-label="Zoom extents"><Icon w={24} h={26}><path d="M2 4l13 14M15 4L2 18M2 8V4h4M11 4h4v4M2 14v4h4" stroke={s} strokeWidth="1.500" /><circle cx="16" cy="17" r="5" fill="#565b60" stroke={s} strokeWidth="1.500" /><path d="M19 20l4 5" stroke={s} strokeWidth="2" /></Icon></button>
      <Icon w={6} h={12}><path d="M0 6h6L3 9z" fill={s} /></Icon>
      <button aria-label="Orbit"><Icon w={24} h={26}><ellipse cx="12" cy="15" rx="10" ry="4.500" stroke={s} strokeWidth="1.500" /><path d="M10 23V8H7l5-5 4 5h-2v15z" fill="#565b60" stroke={s} /></Icon></button>
      <Icon w={6} h={10}><path d="M0 4h6L3 7z" fill={s} /></Icon>
      <button aria-label="Show motion"><Icon w={24} h={28}><path d="M1 5h5v6H1zM9 5h5v6H9zM17 5h5v6h-5zM1 14h15v12H1z" stroke={s} strokeWidth="1.500" /><path d="M6 16l6 4-6 4z" fill={s} /></Icon></button>
      <Icon w={28} h={16}><circle cx="24" cy="11" r="3.500" stroke={s} /><path d="M22 11h4" stroke={s} /></Icon>
    </div>
  );
}

const suggestions: [string, ReactNode][] = [
  ["W (WBLOCK)", <Icon w={16} h={16}><path d="M1 6h9v7H1z" fill="#5d6470" stroke="#aaa" /><circle cx="11" cy="12" r="3" stroke="#ccc" /><path d="M8 2h6M8 5h5M11 0v5" stroke={L} /><path d="M12 5l3-3 1 2-3 3z" fill={Y} /></Icon>],
  ["WALL (OFFSET)", <Icon w={16} h={16}><path d="M16 3H7C-1 3-1 13 7 13h9" stroke={B} strokeWidth="1.500" /><path d="M16 6H8Q4 8 8 10h8" stroke={L} /></Icon>],
  ["WSCURRENT", <Icon w={16} h={16}><path d="M2 2h12v12H2z" stroke={L} strokeDasharray="2 1" strokeWidth="1.500" /><path d="M4 6l4-3 4 3v6H4z" fill="#fff" /></Icon>],
  ["WIPEOUT", <Icon w={16} h={16}><path d="M1 1h14v14H1z" stroke="#b8bcc2" strokeDasharray="1 1" strokeWidth="2" /><path d="M3 4h5l1 3h4v6H3z" fill="#8dcbf7" /></Icon>],
  ["WHEEL (NAVSWHEEL)", <Icon w={16} h={16}><path d="M8 1h7v7a7 7 0 1 1-7-7z" fill={L} /><circle cx="8" cy="8" r="4" stroke="#555" /><circle cx="8" cy="7" r="1.500" stroke="#555" /><path d="M6 11q2-3 4 0" stroke="#555" /></Icon>],
  ["WE (WEDGE)", <Icon w={16} h={16}><path d="M1 2l12 11-1 2H1z" fill="#c8c8c8" /><path d="M1 1l3 1 11 11-3 2z" fill="#fff" /></Icon>],
  ["WSSETTINGS", <Gear size={16} />],
];

function Gear({ size }: { size: number }) {
  return (
    <Icon w={size} h={size} vb="0 0 16 16">
      <circle cx="8" cy="8" r="4" stroke={L} strokeWidth="3" />
      <circle cx="8" cy="8" r="6.500" stroke={L} strokeWidth="2" strokeDasharray="2.550 2.550" />
    </Icon>
  );
}

function CommandPopup() {
  return (
    <div className="absolute top-[264px] left-[859px] w-[190px] text-[11px]">
      <div className="relative ml-px h-[18px] w-[46px] border border-[#444] bg-white">
        <input aria-label="Dynamic input" defaultValue="W" className="block h-4 w-full bg-transparent pl-[3px] text-[#2b2b2b] outline-none" />
        <span className="absolute top-[2px] left-[14px] h-[12px] w-px bg-[#333]" />
      </div>
      <div className="mt-px flex border border-[#77797c] bg-[#3b4453]">
        <ul className="flex-1">
          {suggestions.map(([name, icon], i) => (
            <li key={name} className={`flex h-[17px] items-center gap-[2px] pl-[3px] whitespace-nowrap text-[#e0e0e0] ${i === 0 ? "bg-[#282e39]" : ""}`}>{icon}{name}</li>
          ))}
        </ul>
        <div className="flex w-4 justify-center bg-[#efefef] pt-4"><span className="h-[17px] w-[2px] bg-[#858585]" /></div>
      </div>
    </div>
  );
}

function CommandLine() {
  return (
    <div className="absolute right-[438px] bottom-0 left-[438px] font-['DejaVu_Sans_Mono',monospace] text-[11px]">
      <p className="pl-[62px] text-[#32353e]">Command: Specify opposite corner or [Fence/WPolygon/CPolygon]:</p>
      <div className="mt-[1px] flex h-[25px]">
        <div className="flex w-[55px] items-center gap-[5px] bg-[#292f3b] pl-[3px]">
          <Icon w={6} h={17}><path d="M1 0v17M3 0v17M5 0v17" stroke="#d0d0d0" strokeDasharray="1 1" /></Icon>
          <button aria-label="Close command line"><Icon w={12} h={12}><path d="M2 2l7 8M9 2L2 10" stroke="#c8cacc" strokeWidth="2" /></Icon></button>
          <button aria-label="Customize" className="ml-[3px]"><Icon w={15} h={16}><path d="M2 14L9 6" stroke="#c0c2c4" strokeWidth="2.500" /><path d="M14 3l-3 3-2-2 2-3q-4 0-4 4t4 4 4-6z" fill="#c0c2c4" /></Icon></button>
        </div>
        <div className="flex flex-1 items-center rounded-[2px] border-t border-[#888b90] bg-[#bbbcbf] pr-[3px] pl-1">
          <Icon w={15} h={12}><path d="M.5.5h14v11H.5z" stroke="#5a5d62" /><path d="M0 1h15" stroke="#5a5d62" strokeWidth="2" /><path d="M3 5l2 2-2 2M7 9h4" stroke="#5a5d62" /></Icon>
          <span className="ml-[2px]"><Icon w={7} h={5}><path d="M0 0h7L3.500 5z" fill="#555" /></Icon></span>
          <input aria-label="Command" placeholder="Type a command" className="ml-[6px] flex-1 bg-transparent italic outline-none placeholder:text-[#5f6266]" />
          <Icon w={8} h={5}><path d="M0 5h8L4 0z" fill="#555" /></Icon>
        </div>
      </div>
    </div>
  );
}

function Canvas() {
  return (
    <main className="relative min-w-0 flex-1 overflow-hidden bg-[#212830]">
      <Sheet />
      <div className="absolute top-[5px] left-[3px] text-[11px] text-[#dcdcdc]">[−][Top][2D Wireframe]</div>
      <div className="absolute top-[9px] right-[10px] flex gap-[8px]">
        <button aria-label="Minimize drawing"><Icon w={11} h={10}><path d="M0 7.500h10" stroke="#f1f1f1" strokeWidth="3" /></Icon></button>
        <button aria-label="Restore drawing"><Icon w={11} h={10}><path d="M1 4h6v5H1zM4 1h6v6" stroke="#f1f1f1" strokeWidth="1.500" /></Icon></button>
        <button aria-label="Close drawing"><Icon w={10} h={10}><path d="M1 1l7 8M8 1L1 9" stroke="#f1f1f1" strokeWidth="2" /></Icon></button>
      </div>
      <ViewCube />
      <button className="absolute top-[183px] right-[56px] flex h-4 w-[45px] items-center justify-between rounded-[4px] border border-[#8d919b] bg-[#8a8e99] px-[3px] font-['Liberation_Sans',sans-serif] text-[10px] text-[#555a66]">
        WCS<Icon w={9} h={6}><path d="M1 1h7L4.500 5z" stroke="#b5b8c0" /></Icon>
      </button>
      <NavBar />
      <CommandLine />
      <Crosshair />
      <CommandPopup />
    </main>
  );
}

/* ---------- status bar ---------- */

function Group({ width, children }: { width: string; children: ReactNode }) {
  return <div className={`${width} flex h-[22px] items-center bg-[#3b4453]`}>{children}</div>;
}

function Toggle({ on = false, width = "w-[22px]", label, children }: { on?: boolean; width?: string; label: string; children: ReactNode }) {
  return <button aria-label={label} aria-pressed={on} className={`${width} flex h-[22px] items-center justify-center ${on ? "bg-[#5d8dc1]" : ""}`}>{children}</button>;
}

const arrowhead = <path d="M7 0l3 8 4 8-5-3H8v3H6v-3H5l-5 3 4-8z" fill={L} />;

function StatusBar() {
  return (
    <footer className="flex h-[27px] shrink-0 items-center bg-[#222933] pb-px text-[11px] text-[#e4e4e4]">
      <nav className="flex h-full flex-1 items-start pl-[14px]">
        <div className="flex h-[22px] items-center">
          <button aria-label="Layout menu"><Menu /></button>
          <button className="ml-[9px] h-[22px] w-[64px] bg-[#3b4453] text-center font-bold text-white [clip-path:polygon(8px_0,100%_0,calc(100%-9px)_100%,0_100%)]">Model</button>
          <button className="ml-[6px] w-[40px]">Layout1</button>
          <span className="mx-[8px]"><Slash /></span>
          <button className="w-[40px]">Layout2</button>
          <span className="mx-[7px]"><Slash /></span>
          <Plus />
          <span className="ml-[9px]"><Slash /></span>
        </div>
      </nav>
      <div className="flex items-center gap-[3px] pr-px">
        <Group width="w-[44px] justify-center"><button>MODEL</button></Group>
        <Group width="w-[60px]">
          <Toggle on label="Grid"><Icon w={16} h={16}><path d="M4 1v14M8 1v14M12 1v14M1 4h14M1 8h14M1 12h14" stroke="#fff" strokeWidth="1.500" /></Icon></Toggle>
          <Toggle label="Snap" width="w-[24px]"><Icon w={14} h={14}><path d="M1 2h13M1 7h13M1 12h13" stroke={L} strokeWidth="2" strokeDasharray="2 3" /></Icon></Toggle>
          <span className="ml-[3px]"><Caret /></span>
        </Group>
        <Group width="w-[98px]">
          <Toggle label="Ortho"><Icon w={16} h={16}><path d="M2 0v15h14M2 9h6v6" stroke={L} strokeWidth="1.500" /></Icon></Toggle>
          <Toggle label="Polar" width="w-[26px]"><Icon w={16} h={16}><path d="M13 4a6 6 0 1 0 1 6M7 9h9M7 9l6-8M12 6v6" stroke={L} strokeWidth="1.500" /></Icon></Toggle>
          <Caret />
          <Toggle label="Isometric" width="w-[31px]"><Icon w={16} h={18}><path d="M1 1l14 16" stroke={RD} /><path d="M7 1v16" stroke={GR} /><path d="M6 8h3v3H6z" fill={L} /></Icon></Toggle>
          <Caret />
        </Group>
        <Group width="-ml-[2px] w-[60px]">
          <Toggle label="Tracking"><Icon w={16} h={16}><path d="M14 2L1 14h15" stroke={L} strokeWidth="1.500" /><path d="M9 9q3 2 3 5" stroke={L} /></Icon></Toggle>
          <Toggle on label="Object snap"><Icon w={18} h={18}><path d="M8 3h8v13H3V9" stroke="#fff" strokeWidth="1.500" /><path d="M1 1h5v5H1z" stroke="#fff" strokeWidth="1.500" /></Icon></Toggle>
          <span className="ml-[6px]"><Caret /></span>
        </Group>
        <Group width="w-[99px]">
          <Toggle on label="Annotation visibility"><Icon w={18} h={16} vb="-2 0 18 16">{arrowhead}<circle cx="13" cy="3.500" r="2.500" stroke="#fff" /></Icon></Toggle>
          <Toggle label="Auto scale" width="w-[24px]"><Icon w={18} h={16} vb="-2 0 18 16">{arrowhead}<path d="M14 0l-4 4h3l-3 4" stroke={L} strokeWidth="1.500" /></Icon></Toggle>
          <Toggle label="Annotation"><Icon w={14} h={16}>{arrowhead}</Icon></Toggle>
          <button className="flex items-center gap-1 pl-[3px]">1:1<Caret /></button>
        </Group>
        <Group width="w-[38px]">
          <Toggle label="Workspace"><Gear size={16} /></Toggle>
          <span className="ml-[5px]"><Caret /></span>
        </Group>
        <Group width="w-[22px]"><Toggle label="Annotation monitor"><Icon w={16} h={16}><path d="M0 8h16M8 0v16" stroke={L} strokeWidth="2" /></Icon></Toggle></Group>
        <Group width="w-[23px]"><Toggle label="Isolate objects"><Icon w={16} h={18}><path d="M1 2h6v6H1zM7 11l3 6H4z" stroke={L} /><circle cx="12.500" cy="9" r="3" stroke={L} /></Icon></Toggle></Group>
        <Group width="w-[22px]"><Toggle label="Clean screen"><Icon w={16} h={14}><path d="M1 1h14v12H1zM9 4h3v3M7 10H4V7M12 4L9 7M4 10l3-3" stroke={L} strokeWidth="1.500" /></Icon></Toggle></Group>
        <Group width="w-[23px]"><Toggle label="Customization"><Menu /></Toggle></Group>
      </div>
    </footer>
  );
}

export default function App() {
  return (
    <div className="flex h-screen min-h-[800px] flex-col bg-linear-to-r from-[#2a9fd6] via-[#0b2a55] to-[#0d3561]">
      <DesktopBar />
      <div className="mx-[3px] my-[2px] flex min-h-0 flex-1 flex-col overflow-hidden rounded-[14px] border-[3px] border-[#bd93f9] bg-black">
        <WindowTitle />
        <div className="mr-[63px] ml-16 flex min-h-0 flex-1 flex-col bg-[#222933] font-['Noto_Sans',sans-serif]">
          <AppTitle />
          <RibbonTabs />
          <Ribbon />
          <FileTabs />
          <div className="h-1 shrink-0 bg-[#3b4453]" />
          <div className="flex min-h-0 flex-1">
            <Palette />
            <Canvas />
          </div>
          <div className="h-1 shrink-0 bg-[#3b4453]" />
          <StatusBar />
          <div className="h-[2px] shrink-0 border-t border-white bg-[#777]" />
        </div>
      </div>
    </div>
  );
}
